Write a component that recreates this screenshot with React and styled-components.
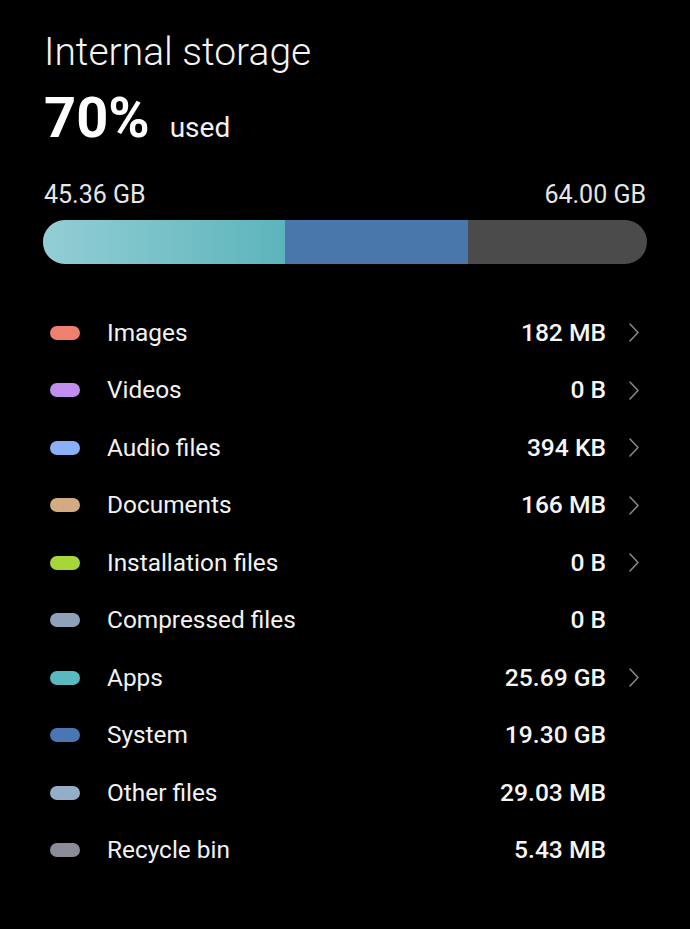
import styled, { createGlobalStyle } from "styled-components";

const TOTAL_GB = 64;

const categories = [
  { name: "Images", size: "182 MB", color: "#ef7f6e", more: true },
  { name: "Videos", size: "0 B", color: "#c18ef0", more: true },
  { name: "Audio files", size: "394 KB", color: "#8ab1f7", more: true },
  { name: "Documents", size: "166 MB", color: "#d3aa82", more: true },
  { name: "Installation files", size: "0 B", color: "#a7d63b", more: true },
  { name: "Compressed files", size: "0 B", color: "#8fa1b9", more: false },
  { name: "Apps", size: "25.69 GB", color: "#5ab8c0", more: true },
  { name: "System", size: "19.30 GB", color: "#4877b3", more: false },
  { name: "Other files", size: "29.03 MB", color: "#95aec7", more: false },
  { name: "Recycle bin", size: "5.43 MB", color: "#8a8c98", more: false },
];

const segments = [
  { gb: 25.69, fill: "linear-gradient(90deg, #92ced4 0%, #5db4bc 100%)" },
  { gb: 19.3, fill: "#4a77ab" },
];

const GlobalStyle = createGlobalStyle`
  html, body {
    margin: 0;
    background: #000;
  }
  body {
    font-family: Roboto, "Noto Sans", sans-serif;
    color: #f2f2f2;
  }
`;

const Page = styled.main`
  min-height: 929px;
  padding: 29px 43px 0;
  box-sizing: border-box;
  background: #000;
`;

const Title = styled.h1`
  margin: 0 0 0 1px;
  font-size: 39px;
  line-height: 46px;
  font-weight: 300;
  color: #f4f4f4;
`;

const Usage = styled.div`
  display: flex;
  align-items: baseline;
  margin: 13px 0 0 1px;
  line-height: 60px;
`;

const Percent = styled.span`
  font-size: 56px;
  font-weight: 700;
  color: #fff;
`;

const UsedLabel = styled.span`
  margin-left: 20px;
  font-size: 28px;
  font-weight: 400;
`;

const Capacity = styled.div`
  display: flex;
  justify-content: space-between;
  margin-top: 23px;
  padding: 0 1px;
  font-size: 25px;
  line-height: 28px;
  color: #e6e6e6;
`;

const Bar = styled.div`
  display: flex;
  height: 44px;
  margin-top: 11px;
  border-radius: 22px;
  overflow: hidden;
  background: #4b4b4b;
`;

const Segment = styled.div`
  height: 100%;
  background: ${(p) => p.$fill};
`;

const List = styled.ul`
  list-style: none;
  margin: 40px 0 0;
  padding: 0;
`;

const Row = styled.li`
  display: flex;
  align-items: center;
  height: 57.5px;
  padding: 0 8px 0 7px;
`;

const Dot = styled.span`
  width: 30px;
  height: 14px;
  border-radius: 7px;
  background: ${(p) => p.$color};
  flex-shrink: 0;
`;

const Label = styled.span`
  flex: 1;
  margin-left: 27px;
  font-size: 24.4px;
  line-height: 28px;
`;

const Size = styled.span`
  font-size: 24.6px;
  line-height: 28px;
  font-weight: 500;
  color: #f6f6f6;
`;

const Chevron = styled.svg`
  width: 10px;
  height: 19px;
  margin-left: 23px;
  flex-shrink: 0;
  visibility: ${(p) => (p.$hidden ? "hidden" : "visible")};
`;

export default function App() {
  return (
    <>
      <GlobalStyle />
      <Page>
        <Title>Internal storage</Title>
        <Usage>
          <Percent>70%</Percent>
          <UsedLabel>used</UsedLabel>
        </Usage>
        <Capacity>
          <span>45.36 GB</span>
          <span>64.00 GB</span>
        </Capacity>
        <Bar>
          {segments.map((s, i) => (
            <Segment
              key={i}
              $fill={s.fill}
              style={{ width: `${(s.gb / TOTAL_GB) * 100}%` }}
            />
          ))}
        </Bar>
        <List>
          {categories.map((c) => (
            <Row key={c.name}>
              <Dot $color={c.color} />
              <Label>{c.name}</Label>
              <Size>{c.size}</Size>
              <Chevron viewBox="0 0 10 19" $hidden={!c.more}>
                <path
                  d="M1 1 L9 9.5 L1 18"
                  fill="none"
                  stroke="#8a8a8a"
                  strokeWidth="1.5"
                  strokeLinecap="round"
                  strokeLinejoin="round"
                />
              </Chevron>
            </Row>
          ))}
        </List>
      </Page>
    </>
  );
}
